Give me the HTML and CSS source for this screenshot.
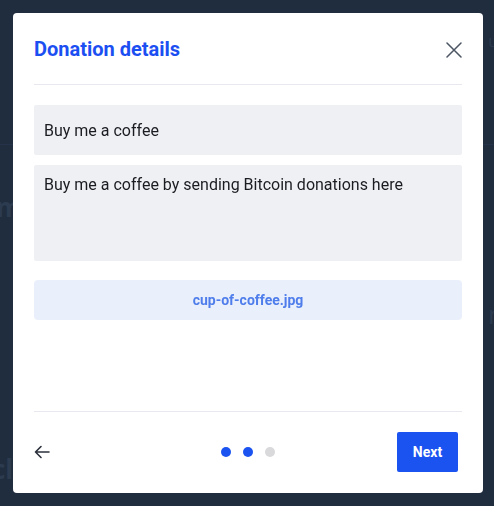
FILE: index.html
```html
<!DOCTYPE html>
<html lang="en">
<head>
  <meta charset="UTF-8" />
  <meta name="viewport" content="width=device-width, initial-scale=1.0"/>
  <title>Donation details</title>
  <link rel="stylesheet" href="styles.css">
</head>
<body>

  <div class="page">
    <div class="page-top">
      <span>(</span>
      <span>u</span>
    </div>
    <div class="page-line"></div>
    <div class="page-big">m</div>
    <div class="page-right">
      <span class="page-big">n</span>
      <span class="page-small">y</span>
    </div>
    <div class="page-big page-bottom">cl</div>
  </div>

  <div class="overlay">
    <div class="modal">
      <div class="modal-header">
        <h2>Donation details</h2>
        <span class="close">
          <svg width="16" height="16" viewBox="0 0 16 16" fill="none" stroke="#4b5563" stroke-width="1.5" stroke-linecap="round">
            <path d="M1 1L15 15M15 1L1 15"/>
          </svg>
        </span>
      </div>

      <div class="modal-body">
        <div class="field">Buy me a coffee</div>
        <div class="field field-area">Buy me a coffee by sending Bitcoin donations here</div>
        <div class="file">cup-of-coffee.jpg</div>
      </div>

      <div class="modal-footer">
        <span class="back">
          <svg width="16" height="16" viewBox="0 0 16 16" fill="none" stroke="#2b303b" stroke-width="1.6" stroke-linecap="round" stroke-linejoin="round">
            <path d="M15 8H1.5M7 2.5L1.5 8L7 13.5"/>
          </svg>
        </span>
        <div class="dots">
          <span class="dot active"></span>
          <span class="dot active"></span>
          <span class="dot"></span>
        </div>
        <button class="next">Next</button>
      </div>
    </div>
  </div>

</body>
</html>
```

FILE: styles.css
```css
body {
  margin: 0;
  background: #1f2d3e;
  font-family: Roboto, "Liberation Sans", sans-serif;
  height: 506px;
  overflow: hidden;
}

/* dimmed page behind the dialog */
.page {
  color: #2c3b4f;
  font-family: "Open Sans", sans-serif;
  margin-left: -4px;
  margin-right: -4px;
}

.page-top {
  display: flex;
  justify-content: space-between;
  padding-top: 30px;
  font-size: 16px;
}

.page-line {
  height: 1px;
  background: #24334a;
  margin-top: 92px;
}

.page-big {
  font-size: 26px;
  font-weight: bold;
  margin-top: 44px;
}

.page-right {
  display: flex;
  flex-direction: column;
  align-items: flex-end;
  margin-top: 76px;
  margin-right: -6px;
}

.page-right .page-big {
  margin-top: 0;
  font-weight: normal;
  line-height: 26px;
}

.page-small {
  font-size: 15px;
  line-height: 16px;
}

.page-bottom {
  margin-top: 108px;
  margin-left: -4px;
}

.overlay {
  position: fixed;
  inset: 0;
  padding: 13px 11px 13px 13px;
}

.modal {
  background: white;
  border-radius: 4px;
  height: 480px;
  padding: 0 21px;
  display: flex;
  flex-direction: column;
}

.modal-header {
  height: 71px;
  display: flex;
  align-items: center;
  justify-content: space-between;
  border-bottom: 1px solid #e8e9ee;
}

.modal-header h2 {
  margin: 0;
  font-size: 20px;
  font-weight: bold;
  color: #1c4ff2;
  padding-top: 1px;
}

.close {
  display: flex;
  padding-top: 2px;
}

.modal-body {
  flex-grow: 1;
  padding-top: 20px;
  display: flex;
  flex-direction: column;
}

.field {
  background: #eff0f4;
  border-radius: 2px;
  height: 50px;
  padding: 0 10px;
  display: flex;
  align-items: center;
  font-size: 16px;
  color: #1a1c22;
}

.field-area {
  margin-top: 10px;
  height: 96px;
  padding: 10px;
  box-sizing: border-box;
  align-items: flex-start;
}

.file {
  margin-top: 19px;
  height: 40px;
  background: #e9f0fb;
  border-radius: 4px;
  display: flex;
  align-items: center;
  justify-content: center;
  font-size: 14px;
  font-weight: bold;
  color: #4f7deb;
}

.modal-footer {
  border-top: 1px solid #e8e9ee;
  padding: 20px 4px 21px 0;
  display: grid;
  grid-template-columns: 1fr auto 1fr;
  align-items: center;
}

.back {
  display: flex;
}

.dots {
  display: flex;
  gap: 12px;
  padding-left: 4px;
}

.dot {
  width: 10px;
  height: 10px;
  border-radius: 50%;
  background: #d9d9dc;
}

.dot.active {
  background: #1a53f0;
}

.next {
  justify-self: end;
  width: 61px;
  height: 40px;
  border: none;
  border-radius: 2px;
  background: #1a53f0;
  color: white;
  font-family: Roboto, sans-serif;
  font-size: 14px;
  font-weight: bold;
}
```
